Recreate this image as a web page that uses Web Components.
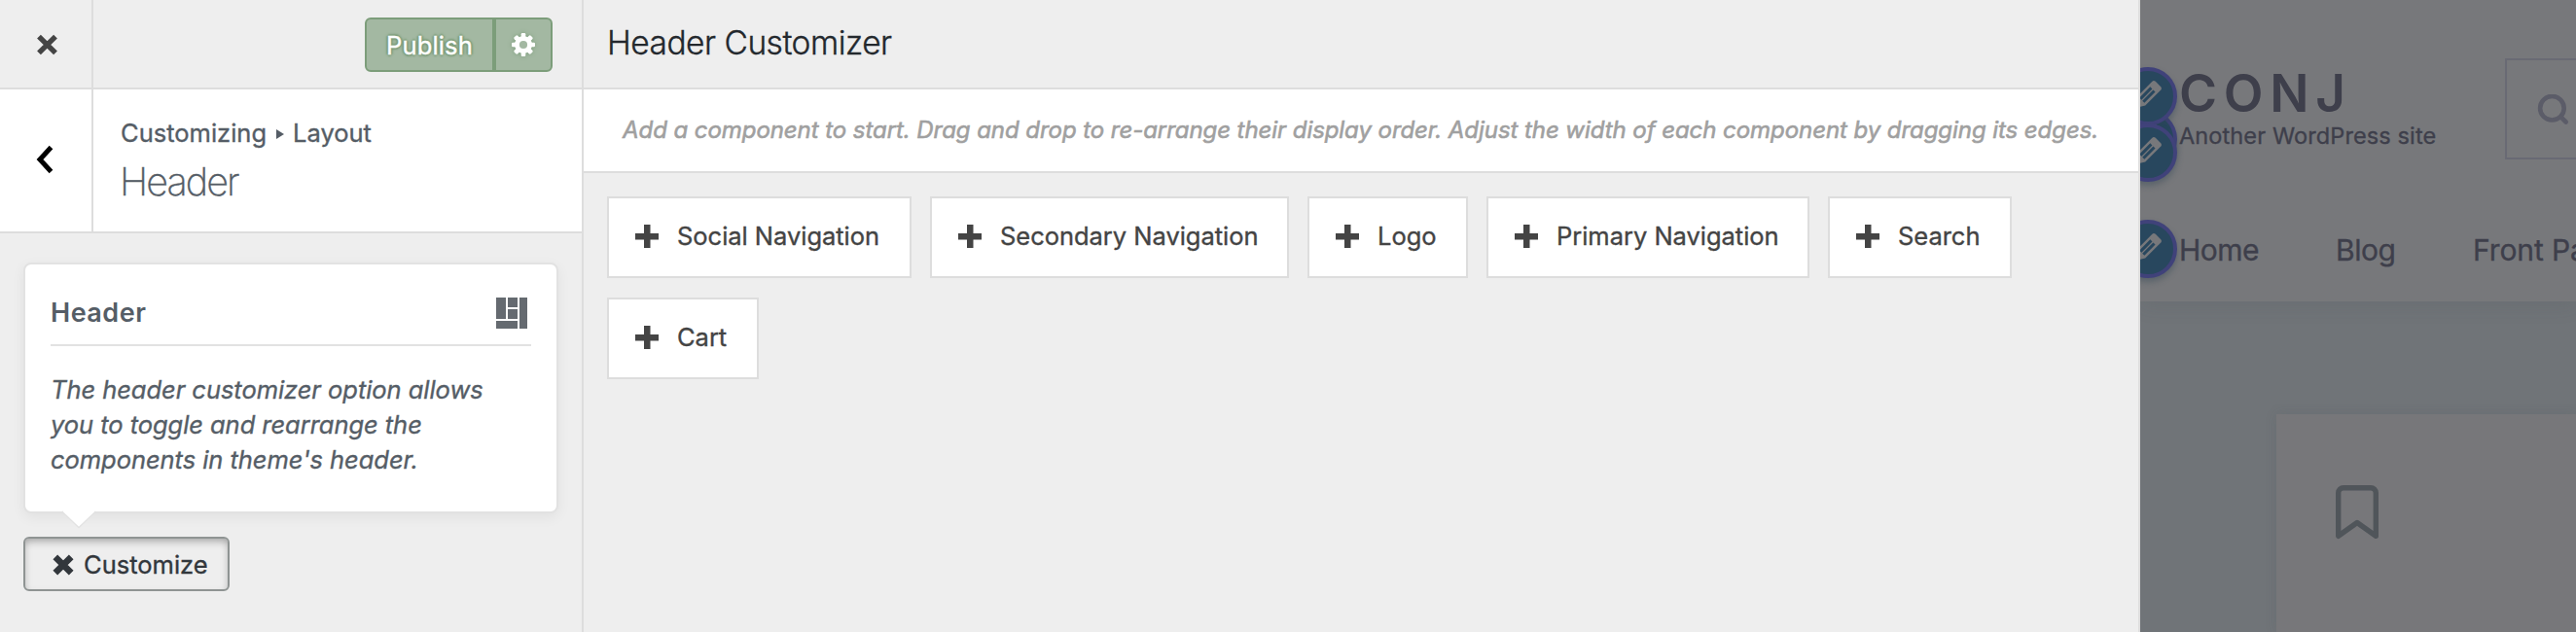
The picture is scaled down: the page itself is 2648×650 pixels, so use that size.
<!DOCTYPE html>
<html lang="en">
<head>
<meta charset="utf-8">
<title>Header Customizer</title>
<style>
html,body{margin:0;height:100%;overflow:hidden;background:#eee}
body{font-family:Inter,"Liberation Sans",sans-serif;-webkit-text-stroke:.35px currentColor}
</style>
</head>
<body>
<cz-app></cz-app>
<script>
const define=(name,html)=>{
  const t=document.createElement('template');
  t.innerHTML='<style>*{box-sizing:border-box}svg{display:block}.t{white-space:pre}</style>'+html;
  customElements.define(name,class extends HTMLElement{
    constructor(){super();this.attachShadow({mode:'open'}).append(t.content.cloneNode(true));}
  });
};

define('cz-publish',`<style>
:host{display:flex;width:193px;height:56px;border:2px solid #7c9d7a;border-radius:6px;background:#a3b8a2;color:#fff;font-size:25.5px;overflow:hidden}
.label{width:133px;border-right:4px solid #7c9d7a;line-height:53px;letter-spacing:.15px;padding-left:20px;text-shadow:0 -2px 2px #7c9d7a,2px 0 2px #7c9d7a,0 2px 2px #7c9d7a,-2px 0 2px #7c9d7a}
.gear{flex:1;display:flex;align-items:center;justify-content:center;padding-right:1px;filter:drop-shadow(0 0 2px #7c9d7a)}
</style><div class="label"><span class="t">Publish</span></div><div class="gear"><svg width="24" height="24" viewBox="-12 -12 24 24"><g fill="#fff"><g><rect x="-2.3" y="-12" width="4.6" height="24" rx="1.2"/><rect x="-12" y="-2.3" width="24" height="4.6" rx="1.2"/></g><g transform="rotate(45)"><rect x="-2.5" y="-12" width="5" height="24" rx="1.4"/><rect x="-12" y="-2.5" width="24" height="5" rx="1.4"/></g><circle r="9"/></g><circle r="4.1" fill="#a3b8a2"/></svg></div>`);

define('cz-topbar',`<style>
:host{display:flex;height:92px;border-bottom:2px solid #ddd;background:#eee}
.close{width:96px;border-right:2px solid #ddd;padding:35px 0 0 37px}
.rest{flex:1;display:flex;justify-content:flex-end;padding:18px 30px 0 0}
</style><div class="close"><svg width="23" height="22" viewBox="0 0 23 22"><path d="M3 2.6 20 19.4M20 2.6 3 19.4" stroke="#444" stroke-width="5.4"/></svg></div><div class="rest"><cz-publish></cz-publish></div>`);

define('cz-section-title',`<style>
:host{display:flex;height:148px;border-bottom:2px solid #ddd;background:#fff;color:#555d66}
.back{width:96px;border-right:2px solid #ddd;padding:57px 0 0 37px}
.txt{padding:28px 0 0 28px}
.crumb{display:flex;align-items:center;height:34px;font-size:25.5px;line-height:34px}
.crumb svg{margin:2px 8px 0 10px}
h3{margin:9px 0 0 -1px;font-size:39.5px;font-weight:200;line-height:48px;letter-spacing:-1.9px}
</style><div class="back"><svg width="18" height="30" viewBox="0 0 18 30"><path d="M15.5 2.5 4 15l11.500 12.500" fill="none" stroke="#000" stroke-width="5"/></svg></div>
<div class="txt"><div class="crumb"><span class="t">Customizing</span><svg width="9" height="10"><path d="M0 0 8 5 0 10z" fill="#555d66"/></svg><span class="t">Layout</span></div><h3><span class="t">Header</span></h3></div>`);

define('cz-tip-card',`<style>
:host{display:block;position:relative;width:550px;height:258px;padding:24px 26px 0;border:2px solid #e2e2e2;border-radius:8px;background:#fff;color:#555d66;box-shadow:0 4px 14px rgba(0,0,0,.06)}
.head{display:flex;justify-content:space-between;align-items:flex-start;height:60px;border-bottom:2px solid #e2e2e2;padding:10px 4px 0 0;font-size:27px;font-weight:600;line-height:32px;letter-spacing:.5px;-webkit-text-stroke:0}
p{margin:27px 0 0;font-size:25.5px;font-style:italic;line-height:36px;letter-spacing:-.05px}
.line{display:block}
.arrow{position:absolute;left:38px;bottom:-18px}
</style><div class="head"><span class="t">Header</span><svg width="32" height="32" fill="#656a70"><path d="M0 0h10v22H0zM12 0h10v10H12zM12 12h10v10H12zM0 24h22v8H0zM24 0h8v32h-8z"/></svg></div>
<p><span class="line"><span class="t">The header customizer option allows</span></span><span class="line"><span class="t">you to toggle and rearrange the</span></span><span class="line"><span class="t">components in theme's header.</span></span></p>
<svg class="arrow" width="34" height="19"><path d="M0 1 17 17.500 34 1" fill="#fff" stroke="#e2e2e2" stroke-width="1.500"/><path d="M1 0h32v1.200L17 16.500 1 1.200z" fill="#fff"/></svg>`);

define('cz-toggle-button',`<style>
:host{display:flex;align-items:flex-start;width:212px;height:56px;border:2px solid #8f9493;border-radius:6px;background:#eee;color:#32373c;font-size:25.5px;line-height:53px;box-shadow:inset 0 4px 8px -2px rgba(0,0,0,.35);padding-left:28px}
svg{margin:15.500px 10px 0 0}
</style><svg width="22" height="22" viewBox="0 0 22 22"><path d="M2.800 2.800 19.200 19.200M19.200 2.800 2.800 19.200" stroke="#32373c" stroke-width="6.600"/></svg><span class="t"><slot></slot></span>`);

define('cz-sidebar',`<style>
:host{display:flex;flex-direction:column;width:600px;height:650px;border-right:2px solid #ddd;background:#eee}
.body{display:flex;flex-direction:column;gap:24px;padding:30px 24px}
</style><cz-topbar></cz-topbar><cz-section-title></cz-section-title><div class="body"><cz-tip-card></cz-tip-card><cz-toggle-button>Customize</cz-toggle-button></div>`);

define('cz-component',`<style>
:host{display:flex;align-items:flex-start;height:84px;border:2px solid #ddd;background:#fff;color:#444;font-size:25.5px;line-height:78px;letter-spacing:-.03px;padding-left:27px}
svg{margin:27px 19px 0 0;flex:none}
</style><svg width="24" height="24" fill="#444"><path d="M9 0h6.500v9H24v6.500h-8.500V24H9v-8.500H0V9h9z"/></svg><span class="t"><slot></slot></span>`);

define('cz-builder',`<style>
:host{display:block;width:1600px;height:650px;border-right:2px solid #ddd;background:#eee}
h2{margin:0;height:92px;border-bottom:2px solid #ddd;padding-left:24px;font-size:33.5px;font-weight:300;line-height:88px;letter-spacing:-.5px;color:#23282d}
.hint{height:86px;border-bottom:2px solid #ddd;background:#fff;color:#a0a0a0;font-size:24px;font-style:italic;line-height:83px;letter-spacing:-.065px;-webkit-text-stroke:.6px #a0a0a0;padding-left:40px}
.list{display:flex;flex-wrap:wrap;gap:20px 19px;padding:24px 120px 0 24px}
</style><h2><span class="t">Header Customizer</span></h2><div class="hint"><span class="t">Add a component to start. Drag and drop to re-arrange their display order. Adjust the width of each component by dragging its edges.</span></div>
<div class="list"><cz-component style="width:313px">Social Navigation</cz-component><cz-component style="width:369px">Secondary Navigation</cz-component><cz-component style="width:165px">Logo</cz-component><cz-component style="width:332px">Primary Navigation</cz-component><cz-component style="width:189px">Search</cz-component><cz-component style="width:156px">Cart</cz-component></div>`);

define('cz-edit-pin',`<style>
:host{position:absolute;left:-22px;width:60px;height:60px;border:4px solid #40427a;border-radius:50%;background:#28475e;box-shadow:0 4px 6px rgba(46,68,83,.4)}
svg{margin:4px 0 0 6px}
</style><svg width="40" height="40" viewBox="0 0 20 20"><path fill="#77787b" d="m13.890 3.390 2.710 2.720c.46.46.42 1.240.03 1.640l-8.010 8.020-5.560 1.160 1.160-5.580s7.600-7.630 7.990-8.030c.39-.39 1.220-.39 1.680.07zm-2.730 2.790-5.590 5.610 1.110 1.110 5.540-5.650zm-2.970 8.230 5.580-5.600-1.070-1.080-5.590 5.600z"/></svg>`);

define('cz-preview',`<style>
:host{display:flex;flex-direction:column;position:relative;width:448px;height:650px;overflow:hidden;background:#707478;color:#3e3f4b}
header{height:310px;background:#77787b;box-shadow:0 4px 20px rgba(60,64,75,.12);padding-left:40px}
.top{display:flex;height:216px;padding-top:60px}
.brand{flex:none;width:335px;padding-top:3px}
.name{font-size:53px;font-weight:600;line-height:66px;letter-spacing:6.7px;-webkit-text-stroke:0}
.tag{font-size:23.500px;line-height:30px;letter-spacing:.12px;margin-top:-4px}
.search{flex:none;width:200px;height:104px;border:2px solid #696a74;padding:35px 0 0 31px}
nav{display:flex;font-size:30px;line-height:40px;letter-spacing:-.5px;padding-top:21px}
nav span{flex:none}
.post{margin:116px 0 0 140px;flex:1;background:#77777a;box-shadow:0 0 12px rgba(60,64,75,.12);padding:73px 0 0 61px}
</style><header><div class="top"><div class="brand"><div class="name"><span class="t">CONJ</span></div><div class="tag"><span class="t">Another WordPress site</span></div></div>
<div class="search"><svg width="34" height="34" fill="none" stroke="#5b5c68" stroke-width="4.600"><circle cx="15.400" cy="14.200" r="12.300"/><path d="m24.500 23.300 5.200 5.200" stroke-linecap="round"/></svg></div></div>
<nav><span style="width:161px"><span class="t">Home</span></span><span style="width:141px"><span class="t">Blog</span></span><span style="letter-spacing:-.1px"><span class="t">Front Page</span></span></nav></header>
<div class="post"><svg width="44" height="56" fill="none" stroke="#50555a" stroke-width="5.400" stroke-linejoin="round"><path d="M2.700 52.300V8a5.300 5.300 0 0 1 5.300-5.300h28A5.300 5.300 0 0 1 41.300 8v44.300L22 38.500z"/></svg></div>
<cz-edit-pin style="top:113px"></cz-edit-pin><cz-edit-pin style="top:69px;z-index:2"></cz-edit-pin><cz-edit-pin style="top:127px;z-index:3"></cz-edit-pin><cz-edit-pin style="top:226px"></cz-edit-pin>`);

define('cz-app',`<style>:host{display:flex;width:2648px;height:650px;overflow:hidden}cz-sidebar,cz-builder,cz-preview{flex:none}</style><cz-sidebar></cz-sidebar><cz-builder></cz-builder><cz-preview></cz-preview>`);
</script>
</body>
</html>
